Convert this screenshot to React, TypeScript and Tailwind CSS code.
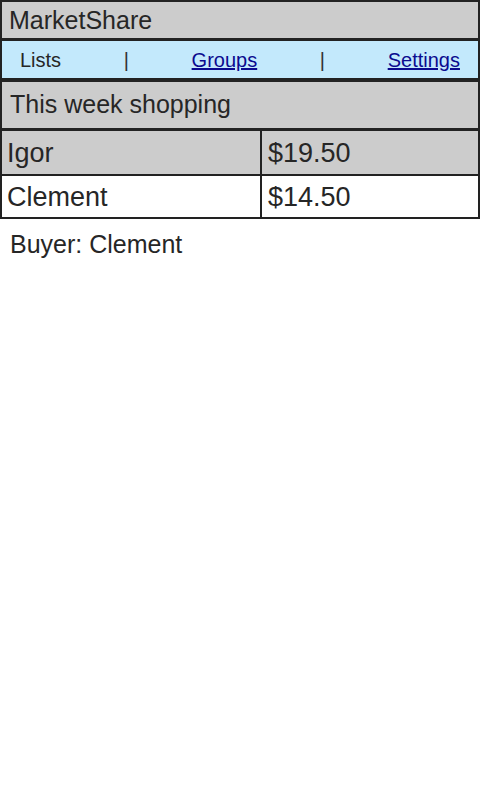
const rows = [
    {name: "Igor", amount: "$19.50", shaded: true},
    {name: "Clement", amount: "$14.50", shaded: false},
];

export default function App() {
    return (
        <div className="w-[480px] min-h-[799px] bg-white text-[#262626] font-['Liberation_Sans',Arial,sans-serif]">
            <div className="h-[41px] border-t-2 border-x-2 border-b-[3px] border-[#222] bg-[#cccccc] pl-[7px] pt-px flex items-center text-[25px]">
                MarketShare
            </div>
            <nav className="h-[41px] border-x-2 border-b-4 border-[#222] bg-[#c3e9fc] pl-[18px] pr-[18px] flex items-center justify-between text-[20px]">
                <span>Lists</span>
                <span className="text-[#333]">|</span>
                <a href="#" className="text-[#0b0b8f] underline">Groups</a>
                <span className="text-[#333]">|</span>
                <a href="#" className="text-[#0b0b8f] underline">Settings</a>
            </nav>
            <div className="h-[49px] border-x-2 border-b-[3px] border-[#222] bg-[#cccccc] pl-2 pt-[4px] text-[25px]">
                This week shopping
            </div>
            <div className="border-x-2 border-b-2 border-[#222] grid grid-cols-[258px_1fr] text-[27px]">
                {rows.map((r, i) => (
                    <div key={r.name} className="contents">
                        <div className={`${r.shaded ? "bg-[#cccccc]" : "bg-white"} ${i > 0 ? "border-t-2 border-[#222]" : ""} h-[43px] pt-[2px] px-[5px] flex items-center`}>
                            {r.name}
                        </div>
                        <div className={`${r.shaded ? "bg-[#cccccc]" : "bg-white"} ${i > 0 ? "border-t-2 border-[#222]" : ""} h-[43px] pt-[2px] border-l-2 border-l-[#222] px-[6px] flex items-center`}>
                            {r.amount}
                        </div>
                    </div>
                ))}
            </div>
            <p className="mt-[7px] pl-[10px] text-[25px]">Buyer: Clement</p>
        </div>
    );
}
